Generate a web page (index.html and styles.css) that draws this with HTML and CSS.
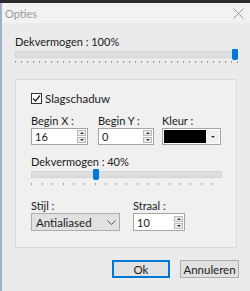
FILE: index.html
```html
<!DOCTYPE html>
<html lang="nl">
<head>
    <meta charset="UTF-8">
    <title>Opties</title>
    <link rel="stylesheet" href="styles.css">
</head>
<body>
    <div class="topbar"></div>
    <div class="window">
        <div class="titlebar">
            <span class="title">Opties</span>
            <svg class="close" width="11" height="11" viewBox="0 0 11 11"><path d="M0.5 0.5L10.5 10.5M10.5 0.5L0.5 10.5" stroke="#9a9a9a" stroke-width="1"/></svg>
        </div>
        <div class="content">
            <div class="label top-label">Dekvermogen : 100%</div>
            <div class="slider wide">
                <div class="track"></div>
                <div class="thumb" style="left: 100%"></div>
            </div>
            <div class="ticks wide-ticks"></div>

            <div class="group">
                <label class="check">
                    <span class="box">
                        <svg width="9" height="9" viewBox="0 0 9 9"><path d="M1 4.5L3.5 7L8 1.5" fill="none" stroke="#222" stroke-width="1.2"/></svg>
                    </span>
                    Slagschaduw
                </label>

                <div class="row fields">
                    <div class="field f-x">
                        <div class="label">Begin X :</div>
                        <div class="spin w-x">
                            <span class="value">16</span>
                            <span class="arrows">
                                <span class="arrow up"></span>
                                <span class="arrow down"></span>
                            </span>
                        </div>
                    </div>
                    <div class="field f-y">
                        <div class="label">Begin Y :</div>
                        <div class="spin w-y">
                            <span class="value">0</span>
                            <span class="arrows">
                                <span class="arrow up"></span>
                                <span class="arrow down"></span>
                            </span>
                        </div>
                    </div>
                    <div class="field">
                        <div class="label">Kleur :</div>
                        <div class="colorpick">
                            <span class="swatch"></span>
                            <span class="drop"><span class="tri"></span></span>
                        </div>
                    </div>
                </div>

                <div class="label mid-label">Dekvermogen : 40%</div>
                <div class="slider narrow">
                    <div class="track"></div>
                    <div class="thumb" style="left: 34%"></div>
                </div>
                <div class="ticks narrow-ticks"></div>

                <div class="row lower">
                    <div class="field">
                        <div class="label">Stijl :</div>
                        <div class="select">
                            <span>Antialiased</span>
                            <svg width="9" height="5" viewBox="0 0 9 5"><path d="M0.5 0.5L4.5 4.5L8.5 0.5" fill="none" stroke="#555" stroke-width="1"/></svg>
                        </div>
                    </div>
                    <div class="field">
                        <div class="label">Straal :</div>
                        <div class="spin w-r">
                            <span class="value">10</span>
                            <span class="arrows">
                                <span class="arrow up"></span>
                                <span class="arrow down"></span>
                            </span>
                        </div>
                    </div>
                </div>
            </div>

            <div class="buttons">
                <button class="btn ok">Ok</button>
                <button class="btn cancel">Annuleren</button>
            </div>
        </div>
    </div>
</body>
</html>
```

FILE: styles.css
```css
body {
    margin: 0;
    font-family: Lato, "Noto Sans", sans-serif;
    font-size: 11px;
    color: #1a1a1a;
    background-color: #ebebeb;
    width: 250px;
    height: 291px;
    overflow: hidden;
}

.topbar {
    height: 3px;
    background-color: #2b2b2b;
}

.window {
    border-left: 2px solid #9db2c8;
    height: 288px;
    background-color: #ebebeb;
}

.titlebar {
    height: 20px;
    display: flex;
    align-items: center;
    justify-content: space-between;
    padding: 0 6px 0 3px;
    background-color: #f2f2f2;
}

.title {
    color: #9a9a9a;
    font-size: 11px;
}

.content {
    padding: 0 9px 0 13px;
}

.label {
    height: 15px;
    line-height: 15px;
    white-space: nowrap;
}

.top-label {
    margin-top: 11px;
}

.slider {
    position: relative;
    height: 11px;
    display: flex;
    align-items: center;
}

.slider.wide {
    width: 223px;
}

.track {
    width: 100%;
    height: 7px;
    background-color: #dedede;
    border: 1px solid #d4d4d4;
    box-sizing: border-box;
}

.thumb {
    position: absolute;
    top: 0;
    width: 6px;
    height: 11px;
    margin-left: -6px;
    background-color: #0078d7;
    border-radius: 1px 1px 2px 2px;
}

.slider.narrow .thumb {
    margin-left: -3px;
}

.ticks {
    height: 2px;
    margin-top: 1px;
    background-image: repeating-linear-gradient(to right, #9a9a9a 0, #9a9a9a 1px, transparent 1px, transparent 6px);
}

.wide-ticks {
    width: 223px;
}

.group {
    margin-top: 16px;
    width: 222px;
    height: 169px;
    box-sizing: border-box;
    border: 1px solid #dadada;
    background-color: #f0f0f0;
    padding: 13px 0 0 15px;
}

.check {
    display: flex;
    align-items: center;
    gap: 3px;
    height: 11px;
    font-size: 11.5px;
}

.box {
    width: 9px;
    height: 9px;
    border: 1px solid #333;
    background-color: #fff;
    display: flex;
    align-items: center;
    justify-content: center;
}

.row {
    display: flex;
}

.fields {
    margin-top: 9px;
}

.field {
    display: flex;
    flex-direction: column;
}

.f-x {
    margin-right: 10px;
}

.f-y {
    margin-right: 8px;
}

.spin {
    height: 17px;
    box-sizing: border-box;
    border: 1px solid #a5a5a5;
    background-color: #fff;
    display: flex;
    align-items: center;
    justify-content: space-between;
    padding: 0 1px 0 3px;
}

.w-x { width: 57px; }
.w-y { width: 56px; }
.w-r { width: 52px; }

.arrows {
    display: flex;
    flex-direction: column;
    gap: 1px;
}

.arrow {
    width: 9px;
    height: 6px;
    box-sizing: border-box;
    border: 1px solid #b9b9b9;
    background-color: #ececec;
    position: relative;
}

.arrow::after {
    content: "";
    position: absolute;
    left: 1.5px;
    border-left: 2px solid transparent;
    border-right: 2px solid transparent;
}

.arrow.up::after {
    top: 1px;
    border-bottom: 2px solid #333;
}

.arrow.down::after {
    top: 1px;
    border-top: 2px solid #333;
}

.colorpick {
    width: 59px;
    height: 17px;
    box-sizing: border-box;
    border: 1px solid #a5a5a5;
    background-color: #fff;
    display: flex;
    padding: 1px;
}

.swatch {
    flex: 1;
    background-color: #000;
}

.drop {
    width: 12px;
    display: flex;
    align-items: center;
    justify-content: center;
    background-color: #f0f0f0;
    margin-left: 1px;
}

.tri {
    border-left: 2px solid transparent;
    border-right: 2px solid transparent;
    border-top: 2px solid #333;
}

.mid-label {
    margin-top: 9px;
}

.slider.narrow {
    width: 191px;
}

.narrow-ticks {
    width: 191px;
    margin-top: 3px;
    background-image: repeating-linear-gradient(to right, #9a9a9a 0, #9a9a9a 1px, transparent 1px, transparent 10.6px);
}

.lower {
    margin-top: 13px;
    gap: 13px;
}

.select {
    width: 89px;
    height: 18px;
    box-sizing: border-box;
    border: 1px solid #adadad;
    background-color: #e1e1e1;
    display: flex;
    align-items: center;
    justify-content: space-between;
    padding: 0 3px 0 4px;
    font-size: 11.5px;
}

.lower .spin {
    height: 18px;
}

.buttons {
    display: flex;
    justify-content: flex-end;
    gap: 10px;
    margin-top: 12px;
    width: 224px;
}

.btn {
    font-family: Lato, "Noto Sans", sans-serif;
    font-size: 11.5px;
    color: #1a1a1a;
    height: 18px;
    padding: 0;
    background-color: #e1e1e1;
    border: 1px solid #adadad;
    flex: none;
}

.btn.ok {
    width: 58px;
    border: 2px solid #0078d7;
}

.btn.cancel {
    width: 59px;
}
```
